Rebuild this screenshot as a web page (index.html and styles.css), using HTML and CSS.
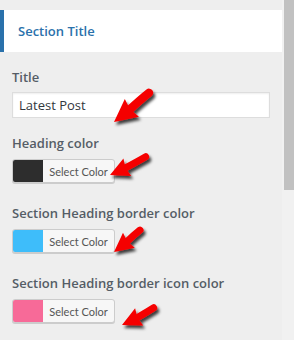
FILE: index.html
```html
<!DOCTYPE html>
<html>
<head>
<meta charset="utf-8">
<link rel="stylesheet" href="styles.css">
</head>
<body>
<div class="screen">
  <div class="panel">
    <div class="section-head">Section Title</div>
    <div class="control control-text">
      <label class="label">Title</label>
      <div class="input">Latest Post</div>
    </div>
    <div class="control">
      <label class="label">Heading color</label>
      <div class="color-btn"><span class="swatch swatch-dark"></span><span class="btn-text">Select Color</span></div>
    </div>
    <div class="control">
      <label class="label">Section Heading border color</label>
      <div class="color-btn"><span class="swatch swatch-blue"></span><span class="btn-text">Select Color</span></div>
    </div>
    <div class="control">
      <label class="label">Section Heading border icon color</label>
      <div class="color-btn"><span class="swatch swatch-pink"></span><span class="btn-text">Select Color</span></div>
    </div>
  </div>
  <div class="scrollbar"><div class="thumb"></div></div>

  <svg class="arrows" width="294" height="340" viewBox="0 0 294 340">
    <defs>
      <filter id="sh" x="-30%" y="-30%" width="160%" height="160%">
        <feDropShadow dx="2" dy="3" stdDeviation="1.4" flood-color="#000" flood-opacity="0.75"/>
      </filter>
    </defs>
    <g filter="url(#sh)">
      <g transform="translate(114 122) rotate(-38.3) scale(1.2)">
        <path d="M16 0 Q 30 -1 38 -1" fill="none" stroke="#f50000" stroke-width="7" stroke-linecap="round"/>
        <polygon points="0,0 19,-9.5 17,0 19,9.5" fill="#f50000"/>
      </g>
      <g transform="translate(110 175) rotate(-24.2)">
        <path d="M16 0 Q 30 -1 40 -2" fill="none" stroke="#f50000" stroke-width="7" stroke-linecap="round"/>
        <polygon points="0,0 19,-9.5 17,0 19,9.5" fill="#f50000"/>
      </g>
      <g transform="translate(114 252) rotate(-38.4)">
        <path d="M16 0 Q 26 -1 34 -1" fill="none" stroke="#f50000" stroke-width="7" stroke-linecap="round"/>
        <polygon points="0,0 19,-9.5 17,0 19,9.5" fill="#f50000"/>
      </g>
      <g transform="translate(122 325) rotate(-25.3)">
        <path d="M16 0 Q 28 -1 36 -2" fill="none" stroke="#f50000" stroke-width="7" stroke-linecap="round"/>
        <polygon points="0,0 19,-9.5 17,0 19,9.5" fill="#f50000"/>
      </g>
    </g>
  </svg>
</div>
</body>
</html>
```
FILE: styles.css
```css
html, body {
  margin: 0;
  padding: 0;
  background: #eeeeee;
}
.screen {
  position: relative;
  width: 294px;
  height: 340px;
  overflow: hidden;
  display: flex;
  font-family: "Open Sans", "Noto Sans", sans-serif;
}
.panel {
  width: 282px;
  flex: none;
}
.section-head {
  margin-top: 10px;
  height: 42px;
  box-sizing: border-box;
  background: #ffffff;
  border-left: 4px solid #2a71ab;
  padding-left: 14px;
  display: flex;
  align-items: center;
  color: #2a71ab;
  font-size: 13px;
  font-weight: 600;
  margin-bottom: 15px;
}
.control {
  padding-left: 12px;
  margin-bottom: 20px;
}
.control-text {
  margin-bottom: 15px;
}
.label {
  display: block;
  font-size: 13px;
  line-height: 20px;
  font-weight: 600;
  color: #555d66;
  margin-bottom: 6px;
}
.control-text .label {
  margin-bottom: 5px;
}
.input {
  width: 258px;
  height: 26px;
  box-sizing: border-box;
  background: #ffffff;
  border: 1px solid #dddddd;
  box-shadow: inset 0 1px 2px rgba(0,0,0,0.07);
  padding-left: 6px;
  font-size: 13px;
  line-height: 24px;
  color: #32373c;
}
.color-btn {
  width: 103px;
  height: 24px;
  box-sizing: border-box;
  display: flex;
  border: 1px solid #cccccc;
  border-radius: 3px;
  background: #f7f7f7;
  box-shadow: 0 1px 0 #cccccc;
  overflow: hidden;
}
.swatch {
  width: 30px;
  flex: none;
  height: 100%;
}
.swatch-dark { background: #2d2d2d; }
.swatch-blue { background: #3ebdfa; }
.swatch-pink { background: #f76a98; }
.btn-text {
  flex: 1;
  display: flex;
  align-items: center;
  justify-content: center;
  font-family: Lato, "Open Sans", sans-serif;
  font-size: 11px;
  color: #555555;
}
.scrollbar {
  width: 12px;
  flex: none;
  background: #f1f1f1;
}
.thumb {
  margin-left: 2px;
  width: 10px;
  height: 190px;
  background: #c1c1c1;
}
.arrows {
  position: absolute;
  left: 0;
  top: 0;
  pointer-events: none;
}
```
